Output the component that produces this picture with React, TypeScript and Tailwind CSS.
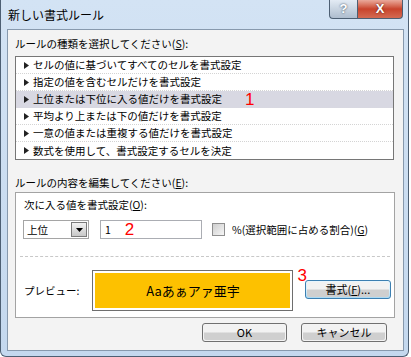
const rules = [
  "セルの値に基づいてすべてのセルを書式設定",
  "指定の値を含むセルだけを書式設定",
  "上位または下位に入る値だけを書式設定",
  "平均より上または下の値だけを書式設定",
  "一意の値または重複する値だけを書式設定",
  "数式を使用して、書式設定するセルを決定",
];

const jp = "font-['Noto_Sans_CJK_JP',sans-serif]";

const Arrow = () => (
  <svg width="5" height="7" viewBox="0 0 5 7" className="shrink-0">
    <path d="M0 0 L5 3.5 L0 7 Z" fill="#222" />
  </svg>
);

const WinButton = ({ label, focused }: { label: React.ReactNode; focused?: boolean }) => (
  <div
    className={
      focused
        ? "h-[19px] rounded-[3px] border border-[#3c7fb1] bg-gradient-to-b from-[#eaf6fd] via-[#d9f0fc] to-[#a7d9f5] p-px"
        : "h-[19px] rounded-[3px] border border-[#707070] p-px"
    }
  >
    <div className="flex h-full items-center justify-center rounded-[2px] bg-gradient-to-b from-[#f2f2f2] from-45% to-[#cfcfcf] to-55% text-[11px] leading-none text-black">
      {label}
    </div>
  </div>
);

export default function App() {
  return (
    <div className={`h-[357px] w-[411px] overflow-hidden bg-white ${jp}`}>
      <div className="flex h-[357px] w-[409px] flex-col rounded-b-[6px] border border-t-0 border-[#4d5f73] bg-gradient-to-b from-[#d3e3f4] to-[#c4d8ee] pb-[5px] pl-[6px] pr-[4px]">
        {/* title bar */}
        <div className="flex h-[29px] items-start">
          <div className="ml-[1px] pt-[8px] text-[12px] leading-[14px] text-black">新しい書式ルール</div>
          <div className="ml-auto mr-[1px] flex">
            <div className="flex h-[19px] w-[28px] items-center justify-center rounded-bl-[4px] border border-t-0 border-r-0 border-[#4d5f73] bg-gradient-to-b from-[#e3ebf4] to-[#aebdce] font-['Liberation_Sans'] text-[13px] font-bold text-white [text-shadow:0_0_2px_#2a3a4a]">
              ?
            </div>
            <div className="flex h-[19px] w-[46px] items-center justify-center rounded-br-[4px] border border-t-0 border-[#4d5f73] bg-gradient-to-b from-[#e9a99b] via-[#c8432c] to-[#d46a52] font-['Liberation_Sans'] text-[13px] font-bold text-white [text-shadow:0_0_2px_#4a1a10]">
              X
            </div>
          </div>
        </div>

        {/* client area */}
        <div className="flex flex-1 flex-col border border-[#8799ad] bg-[#f3f3f3] pl-[7px] pr-[8px] text-[10.5px] text-black">
          <div className="h-[26px] pt-[7px] leading-[14px]">
            ルールの種類を選択してください(<span className="underline">S</span>):
          </div>
          <div className="w-[379px] border border-[#767676] bg-white">
            {rules.map((r, i) => (
              <div
                key={i}
                className={`flex h-[17px] items-center gap-[4px] border-b border-dotted pl-[8px] last:border-b-0 ${
                  i === 2 ? "border-[#d8d8e0] bg-[#d8d8e2]" : "border-[#d4d4d4]"
                }`}
              >
                <Arrow />
                <span className="leading-[14px]">{r}</span>
                {i === 2 && (
                  <span className="ml-[19px] font-['Liberation_Sans'] text-[17px] leading-none text-[#ff0000]">1</span>
                )}
              </div>
            ))}
          </div>

          <div className="h-[32px] pt-[16px] leading-[14px]">
            ルールの内容を編集してください(<span className="underline">E</span>):
          </div>
          <div className="flex h-[126px] w-[380px] flex-col border border-[#a3a3a3] bg-white">
            <div className="pl-[8px] pt-[5px] leading-[14px]">
              次に入る値を書式設定(<span className="underline">O</span>):
            </div>
            <div className="mt-[8px] flex h-[19px] items-center pl-[7px]">
              <div className="flex h-[19px] w-[66px] items-center border border-[#a5a5a5] bg-white pl-[3px] pr-[1px]">
                <span className="leading-[14px]">上位</span>
                <div className="ml-auto flex h-[15px] w-[16px] items-center justify-center border border-[#7b7b7b] bg-gradient-to-b from-[#f2f2f2] to-[#c8c8c8]">
                  <svg width="7" height="4" viewBox="0 0 7 4">
                    <path d="M0 0 H7 L3.5 4 Z" fill="#000" />
                  </svg>
                </div>
              </div>
              <div className="ml-[11px] flex h-[19px] w-[102px] items-center border border-[#abadb3] bg-white pl-[4px]">
                <span className="leading-[14px]">1</span>
                <span className="ml-[14px] font-['Liberation_Sans'] text-[17px] leading-none text-[#ff0000]">2</span>
              </div>
              <div className="ml-[10px] h-[13px] w-[13px] border border-[#8f8f8f] bg-gradient-to-br from-[#cfcfcf] to-[#f6f6f6]" />
              <span className="ml-[7px] leading-[14px]">
                %(選択範囲に占める割合)(<span className="underline">G</span>)
              </span>
            </div>
            <div className="mx-[4px] mt-[17px] border-t border-dashed border-[#c8c8c8]" />
            <div className="mt-[13px] flex items-start pl-[8px]">
              <span className="mt-[14px] leading-[14px]">プレビュー:</span>
              <div className="ml-[13px] h-[41px] w-[201px] border border-[#6e6e6e] bg-white p-[2px]">
                <div className="flex h-full items-center justify-center bg-[#fdc100] text-[13px] leading-none">
                  Aaあぁアァ亜宇
                </div>
              </div>
              <span className="-mt-[3px] ml-[4px] font-['Liberation_Sans'] text-[17px] leading-none text-[#ff0000]">3</span>
              <div className="ml-[-2px] mt-[10px] w-[86px]">
                <WinButton
                  focused
                  label={
                    <>
                      書式(<span className="underline">F</span>)...
                    </>
                  }
                />
              </div>
            </div>
          </div>

          <div className="mt-[5px] flex justify-end gap-[14px] pr-[8px]">
            <div className="w-[85px]">
              <WinButton label="OK" />
            </div>
            <div className="w-[86px]">
              <WinButton label="キャンセル" />
            </div>
          </div>
        </div>
      </div>
    </div>
  );
}
